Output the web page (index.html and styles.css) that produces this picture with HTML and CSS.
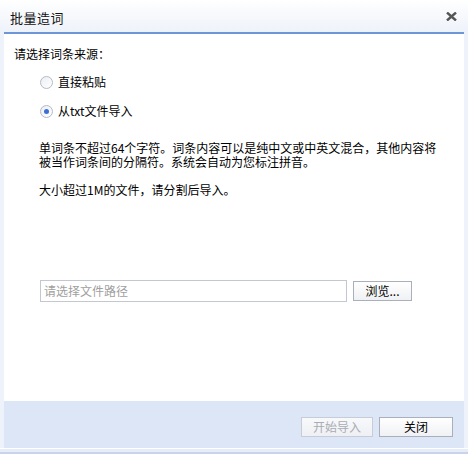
FILE: index.html
```html
<!DOCTYPE html>
<html lang="zh-CN">
<head>
<meta charset="utf-8">
<title>批量造词</title>
<link rel="stylesheet" href="styles.css">
</head>
<body>
<div class="window">
  <div class="titlebar">
    <span class="title">批量造词</span>
    <span class="close">
      <svg width="11" height="9" viewBox="0 0 11 9"><path d="M1 0.5 L10 8.5 M10 0.5 L1 8.5" stroke="#555" stroke-width="2.4" fill="none"/></svg>
    </span>
  </div>
  <div class="content">
    <div class="heading">请选择词条来源：</div>
    <div class="options">
      <label class="option"><span class="radio"></span><span>直接粘贴</span></label>
      <label class="option"><span class="radio checked"></span><span>从txt文件导入</span></label>
    </div>
    <p class="desc">单词条不超过64个字符。词条内容可以是纯中文或中英文混合，其他内容将<br>被当作词条间的分隔符。系统会自动为您标注拼音。</p>
    <p class="desc note">大小超过1M的文件，请分割后导入。</p>
    <div class="filerow">
      <div class="input">请选择文件路径</div>
      <div class="btn browse">浏览...</div>
    </div>
  </div>
  <div class="footer">
    <div class="btn action disabled">开始导入</div>
    <div class="btn action">关闭</div>
  </div>
  <div class="bottom-edge"></div>
</div>
</body>
</html>
```

FILE: styles.css
```css
* { box-sizing: border-box; }
html, body { margin: 0; padding: 0; }
body {
  width: 468px;
  height: 454px;
  overflow: hidden;
  background: #eef2f9;
  font-family: "Noto Sans CJK SC", "Liberation Sans", sans-serif;
  font-size: 12px;
  color: #000;
}
.window {
  width: 468px;
  height: 454px;
  display: flex;
  flex-direction: column;
  background: linear-gradient(#ffffff 0px, #eef2fa 32px, #eef2fa 100%);
}
.titlebar {
  height: 32px;
  display: flex;
  align-items: center;
  justify-content: space-between;
  padding: 2px 11px 0 10px;
}
.title {
  font-size: 13px;
  letter-spacing: 0.5px;
  color: #111;
}
.close {
  display: flex;
  margin-top: -2px;
}
.content {
  margin: 0 4px;
  height: 369px;
  border-top: 2px solid #6d95d8;
  background: #ffffff;
  display: flex;
  flex-direction: column;
  padding: 12px 0 0 10px;
}
.heading {
  line-height: 16px;
  height: 16px;
}
.options {
  display: flex;
  flex-direction: column;
  gap: 13px;
  margin-top: 12px;
  padding-left: 26px;
}
.option {
  display: flex;
  align-items: center;
  gap: 5px;
  height: 16px;
  line-height: 16px;
}
.radio {
  width: 13px;
  height: 13px;
  border-radius: 50%;
  border: 1px solid #b4bac6;
  background: linear-gradient(135deg, #eceef2, #ffffff);
  display: flex;
  align-items: center;
  justify-content: center;
}
.radio.checked::after {
  content: "";
  width: 5px;
  height: 5px;
  border-radius: 50%;
  background: #3b6fd6;
}
.desc {
  margin: 22px 0 0 25px;
  line-height: 14px;
}
.desc.note {
  margin-top: 14px;
}
.filerow {
  display: flex;
  align-items: center;
  gap: 6px;
  margin-top: 83px;
  padding-left: 26px;
}
.input {
  width: 307px;
  height: 22px;
  border: 1px solid #c3c7cf;
  color: #a0a0a0;
  line-height: 20px;
  padding-left: 3px;
  background: #fff;
}
.btn {
  height: 20px;
  border: 1px solid #a9b0bc;
  background: linear-gradient(#ffffff, #f0f1f4);
  display: flex;
  align-items: center;
  justify-content: center;
  line-height: 18px;
}
.browse {
  width: 59px;
}
.footer {
  margin: 0 4px;
  height: 47px;
  background: #dde6f7;
  display: flex;
  justify-content: flex-end;
  align-items: flex-start;
  gap: 6px;
  padding: 16px 11px 0 0;
}
.action {
  width: 74px;
}
.action.disabled {
  width: 72px;
  color: #a9acb2;
  border-color: #c7cdd8;
  background: linear-gradient(#f8f9fb, #eef0f4);
}
.bottom-edge {
  height: 6px;
  margin: 0 0;
  border-top: 1px solid #ffffff;
  border-bottom: 2px solid #c9d4ea;
  background: #e6ecf8;
}
```
